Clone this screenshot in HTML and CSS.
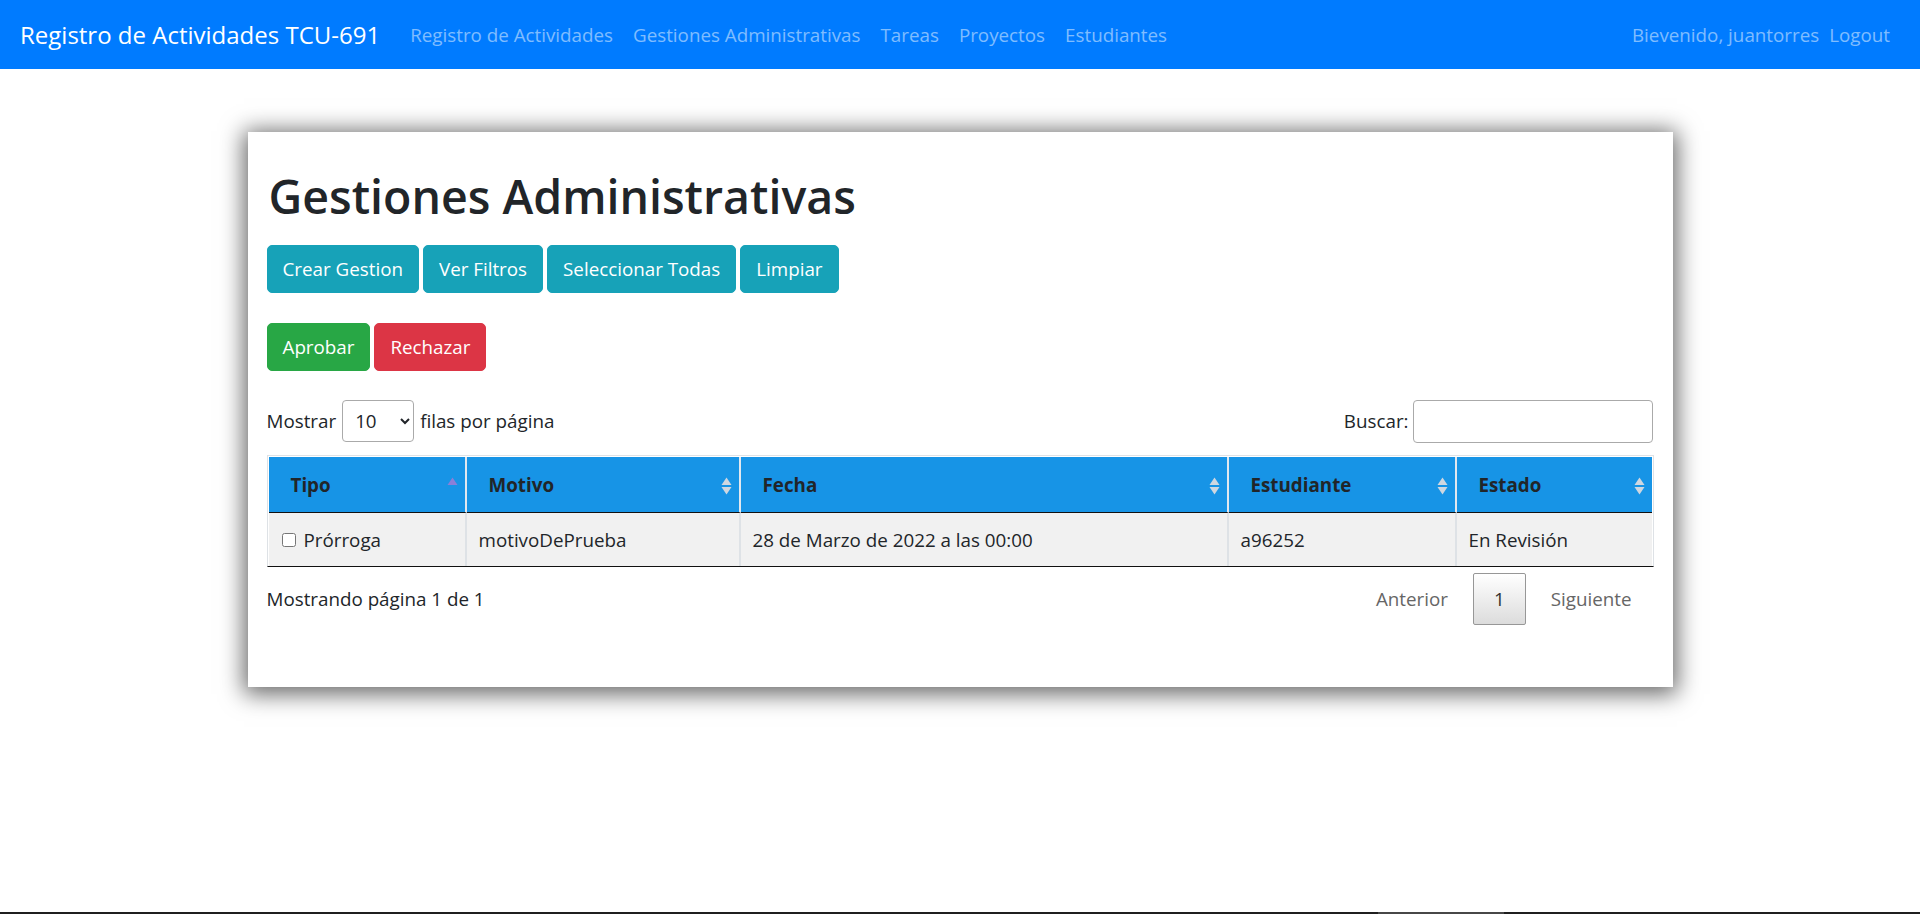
FILE: index.html
```html
<!DOCTYPE html>
<html lang="es">
<head>
<meta charset="utf-8">
<title>Gestiones Administrativas</title>
<link rel="stylesheet" href="styles.css">
</head>
<body>
<nav class="navbar">
  <a class="brand" href="#">Registro de Actividades TCU-691</a>
  <ul class="nav-links">
    <li><a class="nav-link" href="#">Registro de Actividades</a></li>
    <li><a class="nav-link" href="#">Gestiones Administrativas</a></li>
    <li><a class="nav-link" href="#">Tareas</a></li>
    <li><a class="nav-link" href="#">Proyectos</a></li>
    <li><a class="nav-link" href="#">Estudiantes</a></li>
  </ul>
  <div class="nav-right">
    <span class="nav-text">Bievenido, juantorres</span>
    <a class="nav-link" href="#">Logout</a>
  </div>
</nav>

<main class="container">
  <div class="card">
    <h1 class="title">Gestiones Administrativas</h1>
    <div class="btn-row">
      <button class="btn btn-info">Crear Gestion</button>
      <button class="btn btn-info">Ver Filtros</button>
      <button class="btn btn-info">Seleccionar Todas</button>
      <button class="btn btn-info">Limpiar</button>
    </div>
    <div class="btn-row btn-row-last">
      <button class="btn btn-success">Aprobar</button>
      <button class="btn btn-danger">Rechazar</button>
    </div>

    <div class="dt-controls">
      <label class="dt-length">Mostrar
        <select class="dt-select">
          <option>10</option>
          <option>25</option>
          <option>50</option>
        </select>
        filas por página</label>
      <label class="dt-filter">Buscar:<input class="dt-search" type="search"></label>
    </div>

    <table class="dt-table">
      <colgroup>
        <col class="c-tipo"><col class="c-motivo"><col class="c-fecha"><col class="c-est"><col class="c-estado">
      </colgroup>
      <thead>
        <tr>
          <th class="sort-asc">Tipo<span class="sort-icon"><svg width="11" height="18" viewBox="0 0 11 18"><path d="M0.5 8 L5.5 0.5 L10.5 8 Z" fill="#8a7fd8"/></svg></span></th>
          <th>Motivo<span class="sort-icon"><svg width="11" height="18" viewBox="0 0 11 18"><path d="M0.5 8 L5.5 0.5 L10.5 8 Z" fill="#cfd7e0"/><path d="M0.5 10 L5.5 17.5 L10.5 10 Z" fill="#cfd7e0"/></svg></span></th>
          <th>Fecha<span class="sort-icon"><svg width="11" height="18" viewBox="0 0 11 18"><path d="M0.5 8 L5.5 0.5 L10.5 8 Z" fill="#cfd7e0"/><path d="M0.5 10 L5.5 17.5 L10.5 10 Z" fill="#cfd7e0"/></svg></span></th>
          <th>Estudiante<span class="sort-icon"><svg width="11" height="18" viewBox="0 0 11 18"><path d="M0.5 8 L5.5 0.5 L10.5 8 Z" fill="#cfd7e0"/><path d="M0.5 10 L5.5 17.5 L10.5 10 Z" fill="#cfd7e0"/></svg></span></th>
          <th class="last">Estado<span class="sort-icon"><svg width="11" height="18" viewBox="0 0 11 18"><path d="M0.5 8 L5.5 0.5 L10.5 8 Z" fill="#cfd7e0"/><path d="M0.5 10 L5.5 17.5 L10.5 10 Z" fill="#cfd7e0"/></svg></span></th>
        </tr>
      </thead>
      <tbody>
        <tr>
          <td><span class="cell-check"><input type="checkbox" class="row-check">Prórroga</span></td>
          <td>motivoDePrueba</td>
          <td>28 de Marzo de 2022 a las 00:00</td>
          <td>a96252</td>
          <td class="last">En Revisión</td>
        </tr>
      </tbody>
    </table>

    <div class="dt-footer">
      <div class="dt-info">Mostrando página 1 de 1</div>
      <div class="dt-paginate">
        <a class="page-btn disabled">Anterior</a>
        <a class="page-btn current">1</a>
        <a class="page-btn disabled">Siguiente</a>
      </div>
    </div>
  </div>
</main>

<div class="taskbar"><span class="taskbar-seg"></span></div>
</body>
</html>
```

FILE: styles.css
```css
* { box-sizing: border-box; }

html, body { height: 100%; }

body {
  margin: 0;
  min-height: 914px;
  display: flex;
  flex-direction: column;
  font-family: "Open Sans", "Noto Sans", "DejaVu Sans", sans-serif;
  font-size: 18.8px;
  line-height: 30px;
  color: #212529;
  background: #fff;
}

/* ---------- Navbar ---------- */
.navbar {
  display: flex;
  align-items: center;
  height: 69px;
  padding: 0 20px;
  background: #007bff;
}

.brand {
  color: #fff;
  text-decoration: none;
  font-size: 24px;
  line-height: 37px;
  margin-right: 20px;
  white-space: nowrap;
}

.nav-links {
  display: flex;
  list-style: none;
  margin: 0;
  padding: 0;
}

.nav-link {
  display: block;
  padding: 0 10px;
  color: rgba(255, 255, 255, 0.5);
  text-decoration: none;
  white-space: nowrap;
}

.nav-right {
  margin-left: auto;
  display: flex;
  align-items: center;
}

.nav-text {
  color: rgba(255, 255, 255, 0.5);
  white-space: nowrap;
}

/* ---------- Card ---------- */
.container {
  width: 1425px;
  margin: 63px auto 0;
}

.card {
  background: #fff;
  padding: 34px 20px 62px 19px;
  box-shadow: 0 3px 22px 4px rgba(0, 0, 0, 0.6);
}

.title {
  margin: 0 0 19px 2px;
  font-size: 46.5px;
  line-height: 60px;
  font-weight: 600;
  color: #212529;
}

.btn-row {
  display: flex;
  gap: 4px;
  margin-bottom: 30px;
}

.btn-row-last {
  margin-bottom: 28px;
}

.btn {
  font-family: inherit;
  font-size: 18.8px;
  line-height: 30px;
  padding: 8px 15px;
  border: 1px solid transparent;
  border-radius: 5px;
  color: #fff;
  cursor: pointer;
}

.btn-info { background: #17a2b8; border-color: #17a2b8; }
.btn-success { background: #28a745; border-color: #28a745; }
.btn-danger { background: #dc3545; border-color: #dc3545; }

/* ---------- DataTables controls ---------- */
.dt-controls {
  display: flex;
  justify-content: space-between;
  align-items: center;
  height: 44px;
  margin-bottom: 12px;
}

.dt-length, .dt-filter {
  display: flex;
  align-items: center;
  white-space: nowrap;
}

.dt-select {
  width: 72px;
  height: 42px;
  margin: 0 6px;
  padding: 0 6px 0 8px;
  font-family: inherit;
  font-size: 18.8px;
  color: #212529;
  background: #fff;
  border: 1px solid #aaa;
  border-radius: 4px;
}

.dt-search {
  width: 240px;
  height: 43px;
  margin-left: 4px;
  padding: 0 6px;
  font-family: inherit;
  font-size: 18.8px;
  border: 1px solid #aaa;
  border-radius: 4px;
  background: #fff;
}

/* ---------- Table ---------- */
.dt-table {
  width: 1387px;
  table-layout: fixed;
  border-collapse: separate;
  border-spacing: 0;
  border: 1px solid #dee2e6;
  border-bottom: 1px solid #111;
  padding: 1px 1px 0;
}

.c-tipo { width: 198px; }
.c-motivo { width: 274px; }
.c-fecha { width: 488px; }
.c-est { width: 228px; }
.c-estado { width: 195px; }

.dt-table th {
  position: relative;
  height: 56px;
  padding: 0 30px 0 22px;
  text-align: left;
  font-weight: 700;
  color: #212529;
  background: #1794e6;
  border-right: 2px solid #e2e8ef;
  border-bottom: 1px solid #111;
}

.dt-table th.last,
.dt-table td.last { border-right: 0; }

.sort-icon {
  position: absolute;
  right: 7px;
  top: 20px;
  width: 11px;
  height: 18px;
  display: block;
}

.sort-icon svg { display: block; }

.dt-table td {
  height: 53px;
  padding: 0 12px;
  background: #f1f1f1;
  border-right: 2px solid #dee2e6;
  color: #212529;
}

.cell-check {
  display: flex;
  align-items: center;
}

.row-check {
  width: 14px;
  height: 14px;
  margin: 0 8px 0 1px;
}

/* ---------- Footer ---------- */
.dt-footer {
  display: flex;
  justify-content: space-between;
  align-items: flex-start;
  padding-top: 6px;
}

.dt-info {
  padding-top: 11px;
  color: #212529;
}

.dt-paginate {
  display: flex;
  gap: 4px;
}

.page-btn {
  display: block;
  padding: 10px 20px;
  border: 1px solid transparent;
  border-radius: 2px;
  color: #666;
  text-decoration: none;
}

.page-btn.current {
  color: #333;
  padding: 10px 20px;
  border-color: #979797;
  background: linear-gradient(to bottom, #fff 0%, #dcdcdc 100%);
}

/* ---------- Bottom edge ---------- */
.taskbar {
  margin-top: auto;
  height: 2px;
  background: #1f1f1f;
  display: flex;
}

.taskbar-seg {
  margin-left: 1378px;
  width: 126px;
  background: #474747;
}
```
